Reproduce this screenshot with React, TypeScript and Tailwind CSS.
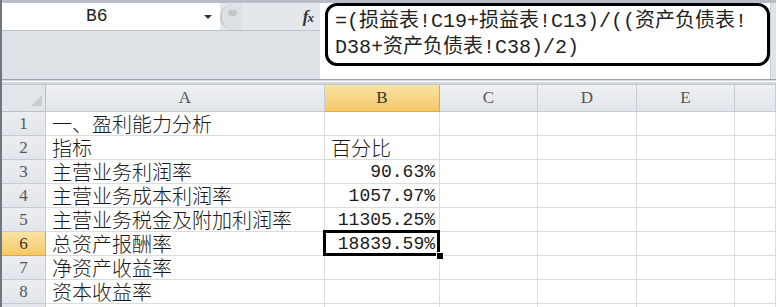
import React from "react"

const cjk = "font-['Noto_Sans_CJK_SC',sans-serif] font-light"
const mono = "font-['Liberation_Mono','Noto_Sans_CJK_SC',monospace]"

const rows: { a: string; b: string; right?: boolean }[] = [
  { a: "一、盈利能力分析", b: "" },
  { a: "指标", b: "百分比" },
  { a: "主营业务利润率", b: "90.63%", right: true },
  { a: "主营业务成本利润率", b: "1057.97%", right: true },
  { a: "主营业务税金及附加利润率", b: "11305.25%", right: true },
  { a: "总资产报酬率", b: "18839.59%", right: true },
  { a: "净资产收益率", b: "" },
  { a: "资本收益率", b: "" },
]

const cols = ["A", "B", "C", "D", "E", ""]

export default function App() {
  return (
    <div className="w-[776px] h-[307px] overflow-hidden bg-[#dfe3e8] flex flex-col border-l-2 border-[#6f7680]">
      {/* top strip */}
      <div className="h-[3px] bg-[#b9bec5] shrink-0" />

      {/* formula bar */}
      <div className="h-[76px] flex shrink-0">
        <div className="w-[320px] flex flex-col">
          <div className="h-[28px] flex items-stretch border-b border-[#bcc2c9]">
            <div className="w-[218px] bg-white flex items-center relative">
              <span className={`${mono} text-[18px] text-[#222] ml-[84px]`}>B6</span>
              <span className="absolute left-[202px] top-[12px] w-0 h-0 border-l-[4px] border-r-[4px] border-t-[4px] border-l-transparent border-r-transparent border-t-[#333]" />
            </div>
            <div className="flex-1 flex items-center bg-[#e4e7eb]">
              <div className="w-[22px] h-[26px] rounded-l-full border-l-2 border-[#c6cbd1] bg-[#dde1e6] flex items-center justify-center">
                <div className="w-[9px] h-[6px] rounded-full bg-[#c3c7cc] -mt-[8px]" />
              </div>
              <div className="flex-1" />
              <span className="font-['Liberation_Serif',serif] italic font-bold text-[17px] text-[#333] mr-[7px] tracking-[-1px]">
                f<span className="text-[13px]">x</span>
              </span>
            </div>
          </div>
          <div className="flex-1" />
        </div>
        <div className="flex-1 bg-white pl-[5px] pb-[12px]">
          <div
            className={`${mono} h-[63px] w-[445px] border-[3px] border-black rounded-[12px] text-[20px] leading-[26px] text-[#222] pl-[7px] pt-[3px] whitespace-nowrap`}
          >
            <div>=(损益表!C19+损益表!C13)/((资产负债表!</div>
            <div>D38+资产负债表!C38)/2)</div>
          </div>
        </div>
        <div className="w-[6px] border-l border-[#c9ced4]" />
      </div>

      {/* divider */}
      <div className="h-[6px] shrink-0 border-t border-[#9aa1aa] bg-[#d4d9df] flex flex-col">
        <div className="h-[1px] bg-white mt-[1px]" />
        <div className="flex-1" />
        <div className="h-[1px] bg-[#c2c7cd]" />
      </div>

      {/* grid */}
      <div className="grid grid-cols-[44px_279px_115px_98px_99px_98px_1fr] grid-rows-[27px_repeat(8,24px)_24px] bg-white">
        {/* header row */}
        <div className="bg-[#e2e6eb] border-r border-b border-[#b8bfc7] relative">
          <span className="absolute right-[3px] bottom-[5px] w-0 h-0 border-l-[11px] border-l-transparent border-b-[11px] border-b-[#c9cdd2]" />
        </div>
        {cols.map((c, i) => (
          <div
            key={i}
            className={`flex items-center justify-center border-r border-b font-['Liberation_Serif',serif] text-[17px] ${
              c === "B"
                ? "bg-gradient-to-b from-[#fbe3a3] to-[#f4c866] border-[#e2a93b] text-[#333]"
                : "bg-gradient-to-b from-[#eef0f3] to-[#e1e5ea] border-[#c6ccd3] text-[#555]"
            }`}
          >
            {c}
          </div>
        ))}

        {rows.map((r, i) => {
          const sel = i === 5
          return (
            <React.Fragment key={i}>
              <div
                className={`flex items-center justify-center border-r border-b font-['Liberation_Serif',serif] text-[17px] ${
                  sel
                    ? "bg-gradient-to-b from-[#fbe3a3] to-[#f4c866] border-[#e2a93b] text-[#333]"
                    : "bg-gradient-to-b from-[#eceef1] to-[#e1e5ea] border-[#c6ccd3] text-[#555]"
                }`}
              >
                {i + 1}
              </div>
              <div className={`${cjk} text-[20px] leading-[22px] text-[#1a1a1a] flex items-center pl-[6px] border-r border-b border-[#dadcdf] whitespace-nowrap`}>
                {r.a}
              </div>
              <div
                className={`relative flex items-center border-r border-b border-[#dadcdf] ${
                  r.right ? `${mono} justify-end pr-[4px] text-[18px]` : `${cjk} pl-[6px] text-[20px]`
                } text-[#1a1a1a] leading-[22px] ${sel ? "z-10" : ""}`}
              >
                {r.b}
                {sel && (
                  <>
                    <span className="absolute -left-[2px] -top-[2px] -right-[1px] -bottom-[1px] border-[3px] border-black" />
                    <span className="absolute -right-[5px] -bottom-[5px] w-[8px] h-[8px] bg-black border border-white z-20" />
                  </>
                )}
              </div>
              {[0, 1, 2, 3].map((k) => (
                <div key={k} className="border-r border-b border-[#dadcdf]" />
              ))}
            </React.Fragment>
          )
        })}
        <div className="bg-[#e2e6eb] border-r border-[#c6ccd3]" />
        {[0, 1, 2, 3, 4, 5].map((k) => (
          <div key={k} className="border-r border-[#dadcdf]" />
        ))}
      </div>
    </div>
  )
}
